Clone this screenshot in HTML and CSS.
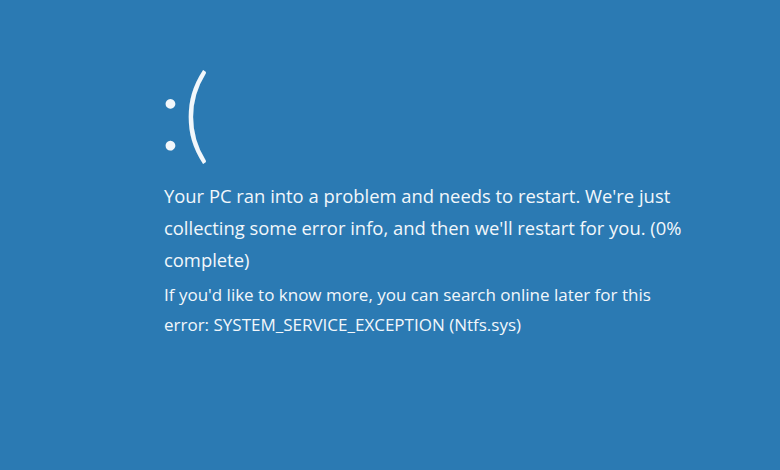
FILE: index.html
```html
<!DOCTYPE html>
<html lang="en">
<head>
<meta charset="utf-8">
<title>Blue screen</title>
<link rel="stylesheet" href="styles.css">
</head>
<body>
<main class="screen">
  <div class="face">:(</div>
  <p class="message">Your PC ran into a problem and needs to restart. We're just collecting some error info, and then we'll restart for you. (0% complete)</p>
  <p class="details">If you'd like to know more, you can search online later for this error: SYSTEM_SERVICE_EXCEPTION (Ntfs.sys)</p>
</main>
</body>
</html>
```
FILE: styles.css
```css
html, body {
  margin: 0;
  padding: 0;
  width: 780px;
  height: 470px;
  overflow: hidden;
  background: #2b7ab3;
}
.screen {
  box-sizing: border-box;
  width: 780px;
  height: 470px;
  padding: 54px 0 0 164px;
  color: #f2f7fb;
  font-family: "Open Sans", "Noto Sans", sans-serif;
}
.face {
  font-family: "Lato", sans-serif;
  font-weight: 300;
  font-size: 104px;
  line-height: 112px;
  margin-left: -6px;
}
.message {
  margin: 14px 0 0;
  width: 540px;
  font-size: 18.4px;
  line-height: 32px;
}
.details {
  margin: 4px 0 0;
  width: 520px;
  font-size: 17px;
  line-height: 30px;
}
```
